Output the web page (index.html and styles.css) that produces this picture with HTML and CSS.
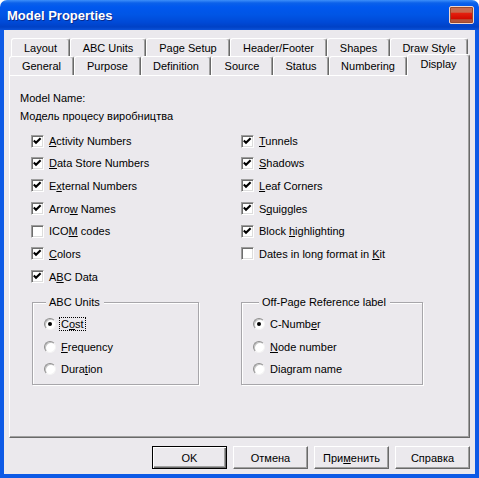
FILE: index.html
```html
<!DOCTYPE html>
<html lang="en">
<head>
    <meta charset="UTF-8">
    <title>Model Properties</title>
    <link rel="stylesheet" href="styles.css">
</head>
<body>
    <div class="window">
        <div class="titlebar">
            <span class="title">Model Properties</span>
            <span class="close"></span>
        </div>
        <div class="frame">
            <div class="tab-row back">
                <div class="tab">Layout</div>
                <div class="tab">ABC Units</div>
                <div class="tab">Page Setup</div>
                <div class="tab">Header/Footer</div>
                <div class="tab">Shapes</div>
                <div class="tab">Draw Style</div>
            </div>
            <div class="tab-row front">
                <div class="tab">General</div>
                <div class="tab">Purpose</div>
                <div class="tab">Definition</div>
                <div class="tab">Source</div>
                <div class="tab">Status</div>
                <div class="tab">Numbering</div>
                <div class="tab active">Display</div>
            </div>

            <div class="panel">
                <div class="line">Model Name:</div>
                <div class="line">Модель процесу виробництва</div>

                <div class="options">
                    <div class="check"><span class="box"><svg viewBox="0 0 11 11"><path d="M1.8 4.6l2.2 2.2 4.6-4.6"/></svg></span><span><u>A</u>ctivity Numbers</span></div>
                    <div class="check"><span class="box"><svg viewBox="0 0 11 11"><path d="M1.8 4.6l2.2 2.2 4.6-4.6"/></svg></span><span><u>T</u>unnels</span></div>
                    <div class="check"><span class="box"><svg viewBox="0 0 11 11"><path d="M1.8 4.6l2.2 2.2 4.6-4.6"/></svg></span><span><u>D</u>ata Store Numbers</span></div>
                    <div class="check"><span class="box"><svg viewBox="0 0 11 11"><path d="M1.8 4.6l2.2 2.2 4.6-4.6"/></svg></span><span><u>S</u>hadows</span></div>
                    <div class="check"><span class="box"><svg viewBox="0 0 11 11"><path d="M1.8 4.6l2.2 2.2 4.6-4.6"/></svg></span><span>E<u>x</u>ternal Numbers</span></div>
                    <div class="check"><span class="box"><svg viewBox="0 0 11 11"><path d="M1.8 4.6l2.2 2.2 4.6-4.6"/></svg></span><span><u>L</u>eaf Corners</span></div>
                    <div class="check"><span class="box"><svg viewBox="0 0 11 11"><path d="M1.8 4.6l2.2 2.2 4.6-4.6"/></svg></span><span>Arro<u>w</u> Names</span></div>
                    <div class="check"><span class="box"><svg viewBox="0 0 11 11"><path d="M1.8 4.6l2.2 2.2 4.6-4.6"/></svg></span><span>S<u>q</u>uiggles</span></div>
                    <div class="check"><span class="box"></span><span>ICO<u>M</u> codes</span></div>
                    <div class="check"><span class="box"><svg viewBox="0 0 11 11"><path d="M1.8 4.6l2.2 2.2 4.6-4.6"/></svg></span><span>Block <u>h</u>ighlighting</span></div>
                    <div class="check"><span class="box"><svg viewBox="0 0 11 11"><path d="M1.8 4.6l2.2 2.2 4.6-4.6"/></svg></span><span><u>C</u>olors</span></div>
                    <div class="check"><span class="box"></span><span>Dates in long format in <u>K</u>it</span></div>
                    <div class="check"><span class="box"><svg viewBox="0 0 11 11"><path d="M1.8 4.6l2.2 2.2 4.6-4.6"/></svg></span><span>A<u>B</u>C Data</span></div>
                </div>

                <div class="groups">
                    <fieldset class="group units">
                        <legend>ABC Units</legend>
                        <div class="radio-item"><span class="radio on"></span><span class="focus">C<u>o</u>st</span></div>
                        <div class="radio-item"><span class="radio"></span><span><u>F</u>requency</span></div>
                        <div class="radio-item"><span class="radio"></span><span>Dura<u>t</u>ion</span></div>
                    </fieldset>
                    <fieldset class="group offpage">
                        <legend>Off-Page Reference label</legend>
                        <div class="radio-item"><span class="radio on"></span><span>C-Numb<u>e</u>r</span></div>
                        <div class="radio-item"><span class="radio"></span><span><u>N</u>ode number</span></div>
                        <div class="radio-item"><span class="radio"></span><span>Diagram name</span></div>
                    </fieldset>
                </div>
            </div>

            <div class="buttons">
                <button class="btn default">OK</button>
                <button class="btn">Отмена</button>
                <button class="btn">При<u>м</u>енить</button>
                <button class="btn">Справка</button>
            </div>
        </div>
    </div>
</body>
</html>
```

FILE: styles.css
```css
body {
    margin: 0;
    background: #fff;
    font-family: "Liberation Sans", Arial, sans-serif;
    font-size: 11px;
    color: #000;
}
.window {
    width: 479px;
    height: 478px;
    display: flex;
    flex-direction: column;
}
.titlebar {
    height: 30px;
    flex: none;
    display: flex;
    align-items: center;
    justify-content: space-between;
    padding: 0 5px 0 7px;
    border-radius: 7px 7px 0 0;
    background: linear-gradient(#3d8ff9 0, #0b61ea 3px, #0058ee 7px, #0055e5 50%, #0049d6 75%, #0041c6 90%, #0b52d8 100%);
}
.title {
    color: #fff;
    font-weight: bold;
    font-size: 13px;
    text-shadow: 1px 1px 0 #0a2a8c;
}
.close {
    width: 25px;
    height: 18px;
    box-sizing: border-box;
    border: 1px solid #f3d6cc;
    box-shadow: inset 0 0 0 1px #9a4a2e;
    border-radius: 2px;
    background: linear-gradient(#c9694c 0, #c9694c 32%, #e4200e 40%, #d20c00 72%, #b4543a 80%, #b4543a 100%);
}
.frame {
    flex: 1;
    display: flex;
    flex-direction: column;
    border: 4px solid #0d5ae6;
    border-top: 0;
    background: #ebe9ed;
    padding: 8px 5px 0;
}
.tab-row {
    display: grid;
    height: 18px;
}
.tab-row.back {
    margin-left: 2px;
    grid-template-columns: 59px 76px 84px 97px 63px 78px;
}
.tab-row.front {
    height: 19px;
    grid-template-columns: 65px 67px 70px 62px 56px 78px 63px;
}
.tab {
    box-sizing: border-box;
    border: 1px solid #fff;
    border-bottom: 0;
    border-right-color: #696969;
    box-shadow: inset -1px 0 #a0a0a0;
    border-radius: 3px 3px 0 0;
    background: #ebe9ed;
    text-align: center;
    padding-top: 1px;
    line-height: 16px;
    white-space: nowrap;
}
.tab.active {
    position: relative;
    z-index: 1;
    height: 22px;
    margin-top: -2px;
    padding-top: 0;
    line-height: 18px;
}
.panel {
    height: 363px;
    box-sizing: border-box;
    border: 1px solid #fff;
    border-right-color: #696969;
    border-bottom-color: #696969;
    box-shadow: inset -1px -1px #a0a0a0;
    padding: 13px 0 0 10px;
}
.line {
    line-height: 18px;
}
.options {
    display: grid;
    grid-template-columns: 210px auto;
    grid-template-rows: 22px 22px 23px 23px 22px 23px 23px;
    margin: 5px 0 0 11px;
}
.check {
    display: flex;
    align-items: center;
}
.box {
    width: 13px;
    height: 13px;
    box-sizing: border-box;
    margin-right: 5px;
    background: #fff;
    border: 1px solid;
    border-color: #9c9c9c #fff #fff #9c9c9c;
    box-shadow: inset 1px 1px #6e6e6e, inset -1px -1px #dcdcdc;
    display: flex;
}
.box svg {
    width: 11px;
    height: 11px;
}
.box path {
    fill: none;
    stroke: #000;
    stroke-width: 2.1;
}
.groups {
    display: flex;
    gap: 42px;
    margin: 7px 0 0 12px;
}
.group {
    margin: 0;
    box-sizing: border-box;
    height: 90px;
    min-width: 0;
    padding: 3px 0 4px 11px;
    border: 1px solid #a7a6aa;
    box-shadow: 1px 1px 0 #fff, inset 1px 1px 0 #fff;
    display: grid;
    grid-template-rows: 22px 23px 22px;
}
.group.units {
    width: 167px;
}
.group.offpage {
    width: 182px;
}
.group legend {
    line-height: 15px;
    padding: 0 4px 0 3px;
    margin-left: 2px;
    background: #ebe9ed;
}
.group.offpage legend {
    margin-left: 6px;
}
.radio-item {
    display: flex;
    align-items: center;
}
.radio {
    width: 12px;
    height: 12px;
    box-sizing: border-box;
    margin-right: 5px;
    border-radius: 50%;
    background: #fff;
    border: 1px solid;
    border-color: #8e8e8e #f4f4f4 #f4f4f4 #8e8e8e;
    box-shadow: inset 1px 1px #c4c4c4;
    display: flex;
    align-items: center;
    justify-content: center;
}
.radio.on::after {
    content: "";
    width: 4px;
    height: 4px;
    border-radius: 50%;
    background: #000;
}
.focus {
    border: 1px dotted #000;
    padding: 0 1px;
    margin-left: -2px;
    line-height: 12px;
}
.buttons {
    display: flex;
    justify-content: flex-end;
    gap: 6px;
    margin-top: 8px;
}
.btn {
    width: 75px;
    height: 23px;
    box-sizing: border-box;
    padding: 0;
    font-family: inherit;
    font-size: 11px;
    color: #000;
    background: #ebe9ed;
    border: 1px solid;
    border-color: #fff #696969 #696969 #fff;
    box-shadow: inset -1px -1px #a0a0a0;
}
.btn.default {
    border-color: #000;
    box-shadow: inset 1px 1px #fff, inset -1px -1px #696969, inset -2px -2px #a0a0a0;
}
```
